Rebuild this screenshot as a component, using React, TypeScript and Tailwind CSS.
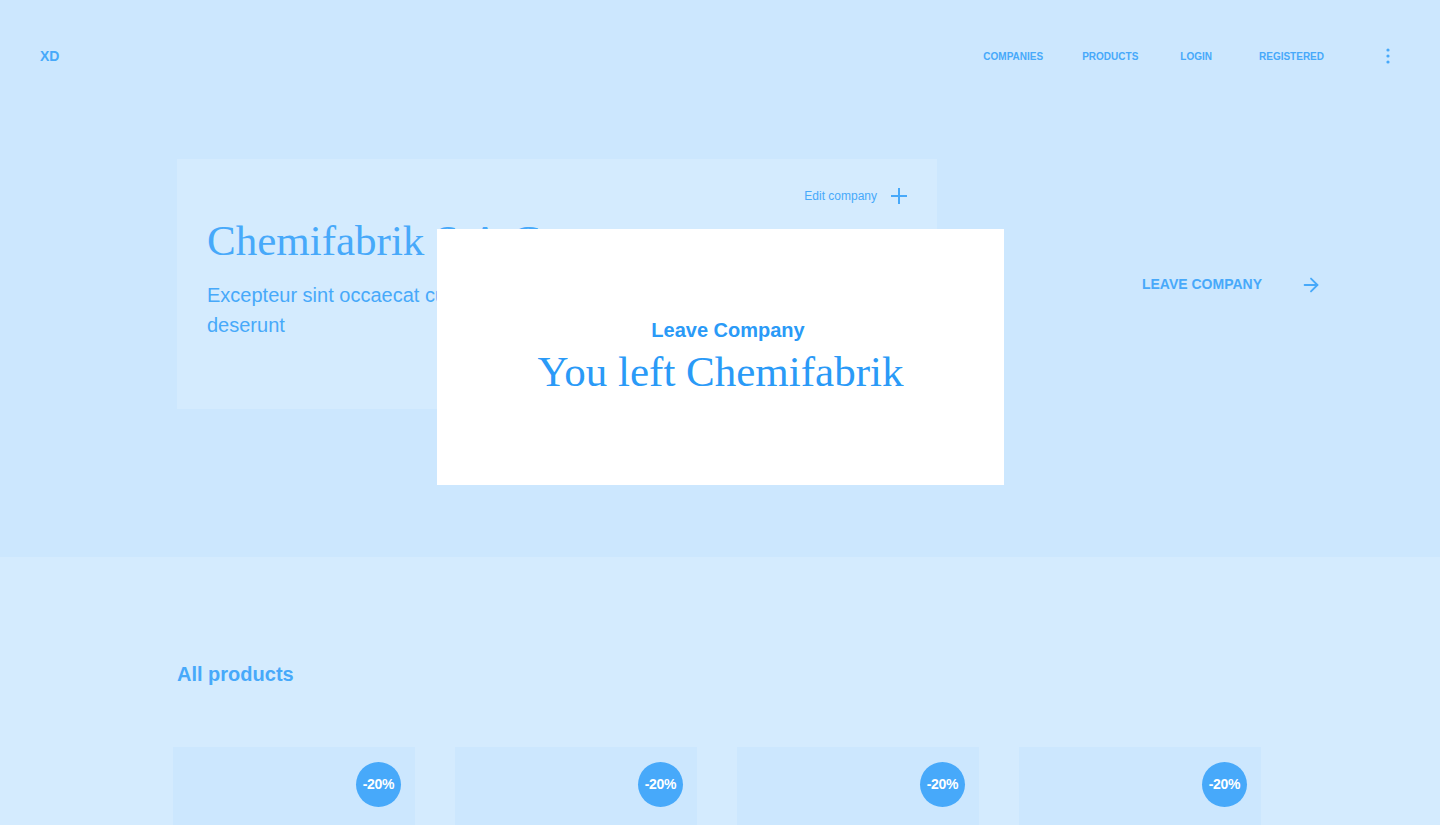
import { ArrowRight } from "lucide-react"

export default function App() {
  const products = [1, 2, 3, 4]
  const nav = ["Companies", "Products", "Login", "Registered"]

  return (
    <div className="relative h-[825px] bg-[#d4ebfe] font-['Liberation_Sans',Arial,sans-serif] text-[#47a9fa] overflow-hidden">
      {/* Top area */}
      <section className="h-[557px] bg-[#cce7fe]">
        <header className="flex items-center h-[112px] pl-10 pr-[50px]">
          <span className="text-[14px] font-bold">XD</span>
          <nav className="ml-auto flex items-center text-[10px] font-bold uppercase">
            <a className="mr-[39px]">{nav[0]}</a>
            <a className="mr-[42px]">{nav[1]}</a>
            <a className="mr-[47px]">{nav[2]}</a>
            <a className="mr-[62px]">{nav[3]}</a>
            <svg width="4" height="16" viewBox="0 0 4 16" className="fill-[#47a9fa]">
              <circle cx="2" cy="2" r="1.6" />
              <circle cx="2" cy="8" r="1.6" />
              <circle cx="2" cy="14" r="1.6" />
            </svg>
          </nav>
        </header>

        <div className="flex items-center pl-[177px] pr-[118px] pt-[47px]">
          <div className="w-[760px] h-[250px] bg-[#d4ebfe] px-[30px] pt-[28px]">
            <div className="flex justify-end items-center gap-[14px] text-[12px]">
              <span>Edit company</span>
              <svg width="16" height="16" viewBox="0 0 16 16" className="stroke-[#47a9fa]" strokeWidth="2">
                <path d="M8 0v16M0 8h16" />
              </svg>
            </div>
            <h1 className="mt-[10px] text-[43px] leading-[52px] font-['Liberation_Serif','Times_New_Roman',serif] text-[#47a9fa]">
              Chemifabrik S.A.G.
            </h1>
            <p className="mt-[13px] max-w-[690px] text-[20px] leading-[30px]">
              Excepteur sint occaecat cupidatat non proident, sunt in culpa qui officia deserunt
            </p>
          </div>
          <div className="ml-auto flex items-center gap-[38px] pt-[1px]">
            <span className="text-[14px] font-bold uppercase">Leave company</span>
            <ArrowRight size={22} strokeWidth={2} />
          </div>
        </div>
      </section>

      {/* Products */}
      <section className="pt-[107px] pl-[173px]">
        <h2 className="pl-1 text-[20px] font-bold leading-none">All products</h2>
        <div className="mt-[63px] flex gap-10">
          {products.map((p) => (
            <div key={p} className="w-[242px] h-[120px] bg-[#cce7fe] flex justify-end pt-[15px] pr-[14px]">
              <div className="w-[45px] h-[45px] rounded-full bg-[#47a9fa] flex items-center justify-center text-white text-[14px] font-bold tracking-[-0.3px]">
                -20%
              </div>
            </div>
          ))}
        </div>
      </section>

      {/* Modal */}
      <div className="absolute left-[437px] top-[229px] w-[567px] h-[256px] bg-white flex flex-col items-center pt-[88px] text-[#2a9af7]">
        <div className="pl-[15px] text-[20px] font-bold leading-[26px]">Leave Company</div>
        <div className="mt-[4px] text-[43px] leading-[50px] font-['Liberation_Serif','Times_New_Roman',serif]">
          You left Chemifabrik
        </div>
      </div>
    </div>
  )
}
